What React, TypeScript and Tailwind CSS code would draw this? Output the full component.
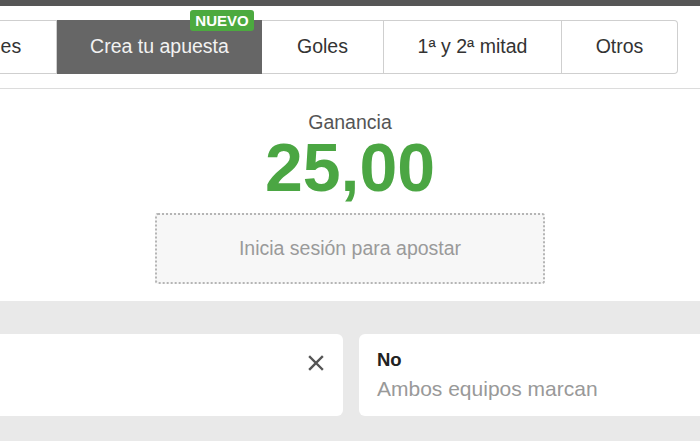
import React from 'react';

const tabs = [
    { label: 'Principales', width: 'w-[166px]' },
    { label: 'Crea tu apuesta', width: 'w-[205px]', active: true, badge: 'NUEVO' },
    { label: 'Goles', width: 'w-[122px]' },
    { label: '1ª y 2ª mitad', width: 'w-[178px]' },
    { label: 'Otros', width: 'w-[116px]', last: true },
];

const CloseIcon = () => (
    <svg width="16" height="16" viewBox="0 0 16 16" fill="none">
        <path d="M2 2L14 14M14 2L2 14" stroke="#555" strokeWidth="2.4" strokeLinecap="square" />
    </svg>
);

const App = () => {
    return (
        <div className="w-[700px] h-[441px] overflow-hidden bg-white font-['Liberation_Sans',Arial,sans-serif]">
            <div className="h-[6px] bg-[#565656]" />

            {/* tabs */}
            <div className="pt-[14px] pb-[14px] border-b border-[#dcdcdc]">
                <div className="flex h-[54px] ml-[-109px]">
                    {tabs.map((t) => (
                        <div
                            key={t.label}
                            className={`relative shrink-0 flex items-center justify-center text-[19.5px] ${t.width} ${
                                t.active
                                    ? 'bg-[#666666] text-[#f2f2f2]'
                                    : 'bg-white text-[#333] border border-[#cfcfcf] border-l-0'
                            } ${t.last ? 'rounded-r-[4px]' : ''}`}
                        >
                            {t.label}
                            {t.badge && (
                                <span className="absolute top-[-10px] left-[133px] h-[21px] w-[64px] rounded-[3px] bg-[#4caa3f] text-white text-[15px] leading-none font-bold flex items-center justify-center">
                                    {t.badge}
                                </span>
                            )}
                        </div>
                    ))}
                </div>
            </div>

            {/* ganancia */}
            <div className="h-[212px] flex flex-col items-center">
                <div className="mt-[22px] text-[19.5px] leading-[22px] text-[#555]">Ganancia</div>
                <div className="text-[68px] leading-none font-bold text-[#4ba643]">25,00</div>
                <div className="mt-[12px] w-[390px] h-[71px] border-2 border-dotted border-[#b5b5b5] rounded-[3px] bg-[#f7f7f7] flex items-center justify-center text-[19.5px] text-[#9a9a9a]">
                    Inicia sesión para apostar
                </div>
            </div>

            {/* selections */}
            <div className="h-[140px] bg-[#e9e9e9] pt-[33px]">
                <div className="flex gap-4 ml-[-8px]">
                    <div className="w-[351px] h-[82px] shrink-0 bg-white rounded-[6px] flex justify-end pt-[21px] pr-[19px]">
                        <CloseIcon />
                    </div>
                    <div className="w-[360px] h-[82px] shrink-0 bg-white rounded-[6px] px-[18px] pt-[14px]">
                        <div className="text-[18.5px] leading-[24px] font-bold text-[#222]">No</div>
                        <div className="text-[21px] leading-[28px] mt-[3px] text-[#999]">Ambos equipos marcan</div>
                    </div>
                </div>
            </div>
        </div>
    );
};

export default App;
